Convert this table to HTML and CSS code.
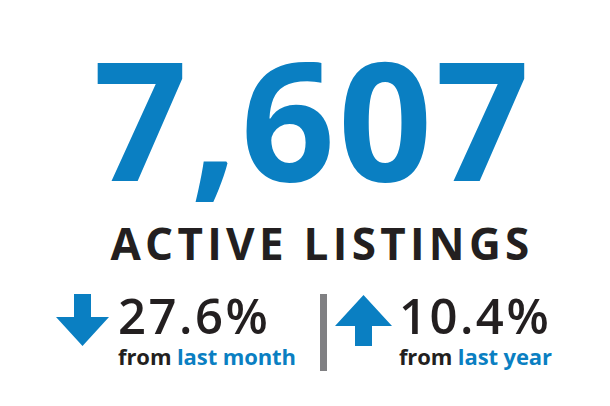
FILE: index.html
```html
<!DOCTYPE html>
<html>
<head>
<meta charset="utf-8">
<link rel="stylesheet" href="styles.css">
</head>
<body>
<main class="card">
  <div class="hero">7,607</div>
  <div class="label">ACTIVE LISTINGS</div>
  <div class="stats">
    <div class="stat">
      <svg class="arrow down" viewBox="0 0 53 52" width="53" height="52"><polygon points="18,0 35,0 35,23 53,23 26.5,52 0,23 18,23"/></svg>
      <div class="stat-text">
        <div class="pct">27.6%</div>
        <div class="sub">from <span class="hl">last month</span></div>
      </div>
    </div>
    <div class="divider"></div>
    <div class="stat">
      <svg class="arrow up" viewBox="0 0 57 51" width="57" height="51"><polygon points="28.5,0 57,31 37,31 37,51 20,51 20,31 0,31"/></svg>
      <div class="stat-text">
        <div class="pct">10.4%</div>
        <div class="sub">from <span class="hl">last year</span></div>
      </div>
    </div>
  </div>
</main>
</body>
</html>
```
FILE: styles.css
```css
html, body {
  margin: 0;
  padding: 0;
  background: #ffffff;
}
.card {
  width: 610px;
  height: 406px;
  display: flex;
  flex-direction: column;
  align-items: center;
  font-family: "Open Sans", "Liberation Sans", sans-serif;
  color: #231f20;
}
.hero {
  margin-top: 35px;
  margin-left: 16px;
  font-size: 165px;
  line-height: 1;
  font-weight: 700;
  color: #0a7fc2;
  letter-spacing: 3px;
}
.label {
  margin-top: 21px;
  margin-left: 34px;
  font-size: 44px;
  line-height: 1;
  font-weight: 700;
  letter-spacing: 4.3px;
}
.stats {
  margin-top: 26px;
  margin-left: -2px;
  display: flex;
  align-items: flex-start;
}
.stat {
  display: flex;
  align-items: flex-start;
}
.arrow {
  display: block;
  fill: #0a7fc2;
}
.arrow.down { margin-top: 3px; margin-right: 9px; }
.arrow.up { margin-top: 4px; margin-right: 7px; }
.stat-text {
  display: flex;
  flex-direction: column;
}
.pct {
  font-size: 49px;
  line-height: 1;
  font-weight: 600;
  letter-spacing: 2.5px;
}
.sub {
  margin-top: 5px;
  font-size: 22px;
  line-height: 1;
  font-weight: 700;
  letter-spacing: -0.1px;
}
.hl { color: #0a7fc2; }
.divider {
  width: 7px;
  height: 77px;
  margin: 3px 8px 0 24px;
  background: #808083;
}
```
